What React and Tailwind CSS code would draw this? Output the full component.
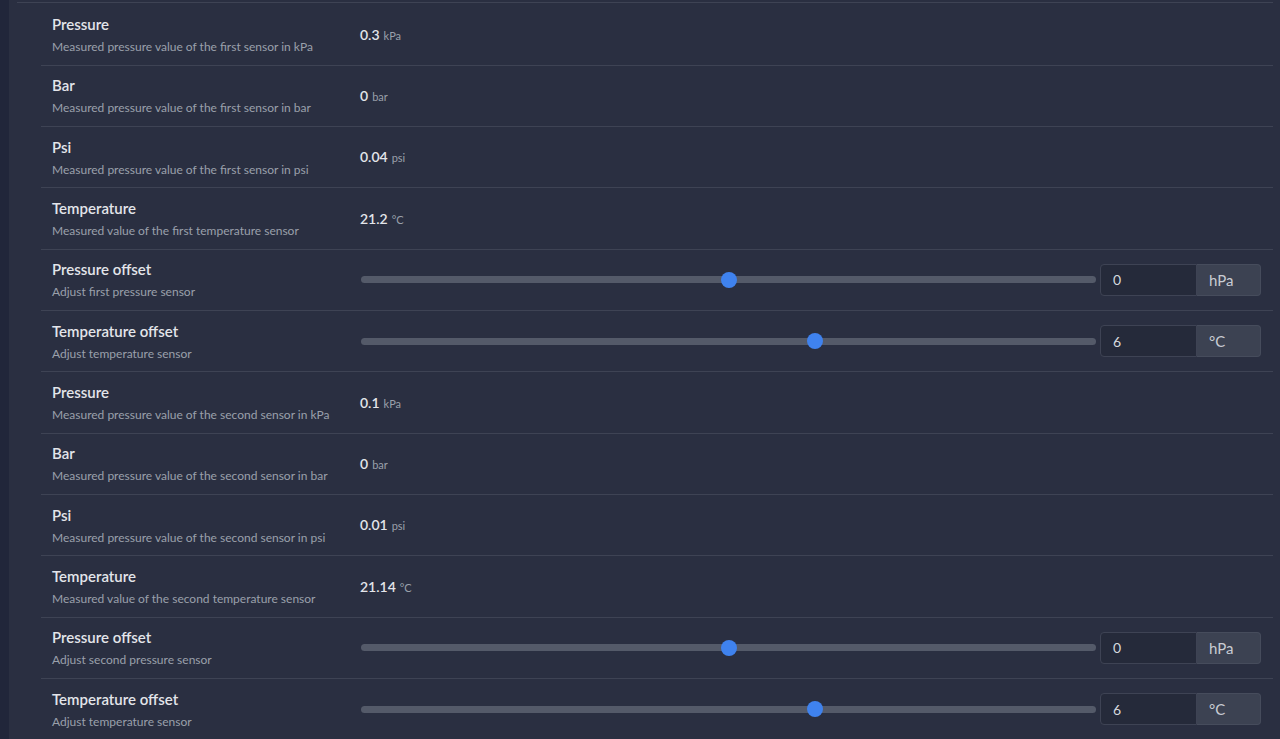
import React from "react";

const rows = [
  { title: "Pressure", desc: "Measured pressure value of the first sensor in kPa", value: "0.3", unit: "kPa" },
  { title: "Bar", desc: "Measured pressure value of the first sensor in bar", value: "0", unit: "bar" },
  { title: "Psi", desc: "Measured pressure value of the first sensor in psi", value: "0.04", unit: "psi" },
  { title: "Temperature", desc: "Measured value of the first temperature sensor", value: "21.2", unit: "°C" },
  { title: "Pressure offset", desc: "Adjust first pressure sensor", slider: 0, unit: "hPa" },
  { title: "Temperature offset", desc: "Adjust temperature sensor", slider: 6, unit: "°C" },
  { title: "Pressure", desc: "Measured pressure value of the second sensor in kPa", value: "0.1", unit: "kPa" },
  { title: "Bar", desc: "Measured pressure value of the second sensor in bar", value: "0", unit: "bar" },
  { title: "Psi", desc: "Measured pressure value of the second sensor in psi", value: "0.01", unit: "psi" },
  { title: "Temperature", desc: "Measured value of the second temperature sensor", value: "21.14", unit: "°C" },
  { title: "Pressure offset", desc: "Adjust second pressure sensor", slider: 0, unit: "hPa" },
  { title: "Temperature offset", desc: "Adjust temperature sensor", slider: 6, unit: "°C" },
];

// slider range is -25..25
const Slider = ({ value }) => {
  const pct = (value + 25) / 50;
  return (
    <div className="relative flex-1 h-4 flex items-center">
      <div className="w-full h-[7px] rounded-full bg-[#545a69]" />
      <div
        className="absolute top-0 w-4 h-4 rounded-full bg-[#3f82ee]"
        style={{ left: `calc(${pct} * (100% - 16px))` }}
      />
    </div>
  );
};

const Row = ({ row }) => (
  <div className="h-[61.33px] flex items-center pl-[11px] pr-3 border-b border-[#3e4354]">
    <div className="w-[308px] shrink-0">
      <div className="text-[15px] font-semibold text-[#e3e5ea] leading-[18px]">{row.title}</div>
      <div className="text-[12px] text-[#9aa0ab] leading-[14px] mt-[7px]">{row.desc}</div>
    </div>
    {row.slider === undefined ? (
      <div className="pb-[2px]">
        <span className="text-[14px] font-semibold text-[#e3e5ea]">{row.value}</span>
        <span className="text-[11px] text-[#9aa0ab] ml-1">{row.unit}</span>
      </div>
    ) : (
      <div className="flex-1 flex items-center gap-1 pl-[1px]">
        <Slider value={row.slider} />
        <div className="flex h-8">
          <div className="w-[97px] bg-[#252a3a] border border-[#3e4354] rounded-l-sm flex items-center px-3 text-[14px] text-[#d6d9df]">
            {row.slider}
          </div>
          <div className="w-16 bg-[#3c4252] border border-l-0 border-[#464c5c] rounded-r-sm flex items-center px-3 text-[15px] text-[#c9ccd3]">
            {row.unit}
          </div>
        </div>
      </div>
    )}
  </div>
);

export default function App() {
  return (
    <div
      className="w-[1280px] h-[739px] overflow-hidden flex bg-[#2a2f41]"
      style={{ fontFamily: '"Lato", "Open Sans", sans-serif' }}
    >
      <div className="w-[9px] shrink-0 bg-[#21263a]" />
      <div className="flex-1 pl-2 pr-[7px]">
        <div className="mt-[2px] border-t border-[#3e4354] pl-6 pt-[1.5px]">
          {rows.map((row, i) => (
            <Row key={i} row={row} />
          ))}
        </div>
      </div>
    </div>
  );
}
